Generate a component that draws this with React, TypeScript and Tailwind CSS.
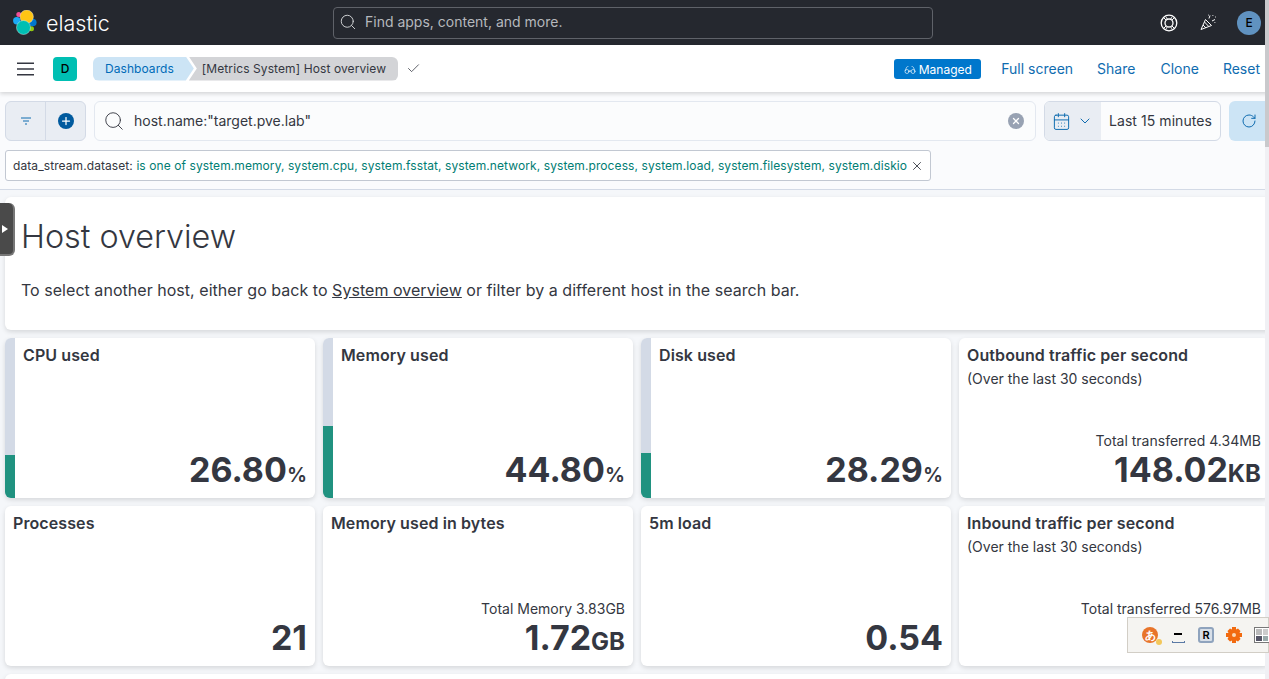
import { Search, CalendarDays, ChevronDown, RotateCw, X, Plus, Check, Glasses } from 'lucide-react'

const font = { fontFamily: 'Inter, sans-serif' }

function ElasticLogo() {
    return (
        <svg width="26" height="26" viewBox="0 0 26 26" className="shrink-0">
            <circle cx="3.8" cy="10.800" r="3.700" fill="#1ba9f5" />
            <circle cx="19.800" cy="12.500" r="3.800" fill="#0077cc" />
            <circle cx="5.800" cy="4.500" r="2.500" fill="#f04e98" />
            <circle cx="18.500" cy="18.800" r="2.500" fill="#93c90e" />
            <circle cx="13.700" cy="6.700" r="6.700" fill="#fec514" stroke="#f5f7fa" strokeWidth="0.4" />
            <circle cx="10.500" cy="17.500" r="7" fill="#00bfb3" stroke="#f5f7fa" strokeWidth="0.4" />
        </svg>
    )
}

function LifeBuoyIcon() {
    return (
        <svg width="18" height="18" viewBox="0 0 18 18" fill="none" stroke="white" strokeWidth="1.300" className="shrink-0">
            <circle cx="9" cy="9" r="7.800" />
            <circle cx="9" cy="9" r="4" />
            <path d="M3.500 3.500l2.700 2.700M6.200 3.200l1.200 2.100M14.500 3.500l-2.700 2.700M11.800 3.200l-1.200 2.100M3.500 14.500l2.700-2.700M6.200 14.800l1.200-2.100M14.500 14.500l-2.700-2.700M11.800 14.800l-1.200-2.100" strokeWidth="1" />
        </svg>
    )
}

function PartyIcon() {
    return (
        <svg width="17" height="17" viewBox="0 0 17 17" fill="none" stroke="white" strokeWidth="1" className="shrink-0">
            <path d="M1 15.500L5.500 5.500l6 6z" />
            <path d="M3 11l3 3M4.500 8l4.200 4.400" />
            <path d="M9 4.500l1-3M12 7l3-1.500" />
            <path d="M12.500 1.500h.8M15 3h.8M14.500 8.500h.8M8 1.200h.6" strokeWidth="1.200" />
        </svg>
    )
}

type Stat = {
    title: string
    subtitle?: string
    caption?: string
    value: string
    unit?: string
    fill?: number
}

function StatCard({ title, subtitle, caption, value, unit, fill }: Stat) {
    return (
        <div className="relative flex h-40 w-[310px] shrink-0 overflow-hidden rounded-md bg-white shadow-[0_2px_5px_rgba(0,0,0,0.13)]">
            {fill !== undefined && (
                <div className="flex w-2.5 shrink-0 flex-col justify-end bg-[#d3dae6]">
                    <div className="bg-[#209280]" style={{ height: `${fill}%` }} />
                </div>
            )}
            <div className="flex min-w-0 flex-1 flex-col px-2 pb-[7px] pt-[7px]">
                <div className="text-base font-semibold leading-5 tracking-[0.1px] text-[#343741]">{title}</div>
                {subtitle && <div className="mt-[5px] text-sm leading-[17px] text-[#343741]">{subtitle}</div>}
                <div className="mt-auto text-right">
                    {caption && <div className="text-sm leading-[17px] text-[#343741]">{caption}</div>}
                    <div className="h-[42px] text-[34px] font-bold leading-[42px] text-[#343741]">
                        {value}
                        {unit && <span className={unit === '%' ? 'text-[20px] font-semibold leading-none' : 'text-[24px] font-bold leading-none'}>{unit}</span>}
                    </div>
                </div>
            </div>
        </div>
    )
}

function ImeToolbar() {
    return (
        <div className="absolute left-[1127px] top-[617px] z-30 flex h-[36px] w-[142px] items-center gap-3 border border-[#d2cec6] bg-[#f5f4f1] pl-[14px]">
            <div className="relative flex h-4 w-4 shrink-0 items-center justify-center rounded-full bg-[#e8742a] text-[11px] font-bold leading-none text-white">
                あ
                <div className="absolute -bottom-0.5 -right-1 h-1.5 w-1.5 rounded-full bg-[#f3c75a]" />
            </div>
            <div className="flex h-4 w-4 shrink-0 flex-col items-center justify-end">
                <div className="mb-1.5 h-0.5 w-2 bg-black" />
                <div className="h-0.5 w-[13px] border-x border-b border-[#5b7aa5]" />
            </div>
            <div className="flex h-4 w-4 shrink-0 items-center justify-center rounded-[3px] border-2 border-[#8fa3bd] bg-[#d8dfe8] text-[11px] font-semibold leading-none text-black">
                R
            </div>
            <svg width="16" height="16" viewBox="0 0 16 16" className="shrink-0">
                <path d="M6 0h4v2.500l2-1 2.500 2.500-1 2h2.500v4h-2.500l1 2-2.500 2.500-2-1v2.500h-4v-2.500l-2 1-2.500-2.500 1-2h-2.500v-4h2.500l-1-2 2.500-2.500 2 1z" fill="#f26a0f" />
                <circle cx="8" cy="8" r="2" fill="#fbd9b5" />
            </svg>
            <div className="grid h-4 w-4 shrink-0 grid-cols-2 gap-px border border-[#777] bg-white p-px">
                <div className="bg-[#bbb]" />
                <div className="bg-[#ccc]" />
                <div className="bg-[#556]" />
                <div className="bg-[#9aa]" />
            </div>
        </div>
    )
}

export default function App() {
    return (
        <div className="relative h-[679px] w-[1269px] overflow-hidden bg-[#f5f7fa]" style={font}>
            {/* Top header */}
            <header className="flex h-[45px] items-center bg-[#25282f]">
                <div className="flex w-[333px] shrink-0 items-center pl-[13px]">
                    <ElasticLogo />
                    <span className="ml-[7px] mt-0.5 text-[21.5px] font-light leading-none text-white">elastic</span>
                </div>
                <div className="flex h-8 w-[600px] items-center gap-[7px] rounded border border-[#5f6269] pb-0.5 pl-[5px] text-sm text-[#b5b8bd]">
                    <Search className="h-[18px] w-[18px] text-[#d4d6d9]" strokeWidth={1.25} />
                    <span className="ml-px">Find apps, content, and more.</span>
                </div>
                <div className="ml-auto flex items-center pr-2">
                    <LifeBuoyIcon />
                    <div className="ml-[22px]">
                        <PartyIcon />
                    </div>
                    <div className="ml-5 flex h-6 w-6 items-center justify-center rounded-full bg-[#6092c0] text-xs font-medium text-black">E</div>
                </div>
            </header>

            {/* App bar */}
            <div className="relative z-10 flex h-[47px] items-center bg-white pl-[17px] shadow-[0_2px_4px_rgba(0,0,0,0.15)]">
                <svg width="17" height="14" viewBox="0 0 17 14" stroke="#343741" strokeWidth="1.600">
                    <path d="M0 1.200h17M0 7h17M0 12.800h17" />
                </svg>
                <div className="ml-[19px] flex h-6 w-6 items-center justify-center rounded bg-[#00bfb3] text-xs font-medium text-black">D</div>
                <div className="ml-4 flex h-6 items-center rounded-l-md bg-[#cce4f5] pl-3 pr-5 text-xs tracking-[0.06px] text-[#006bb8] [clip-path:polygon(0_0,calc(100%-8px)_0,100%_50%,calc(100%-8px)_100%,0_100%)]">
                    Dashboards
                </div>
                <div className="-ml-[5px] flex h-6 items-center rounded-r-md bg-[#d3d4d7] pl-[13px] pr-3 text-xs tracking-[0.1px] text-[#343741] [clip-path:polygon(0_0,100%_0,100%_100%,0_100%,8px_50%)]">
                    [Metrics System] Host overview
                </div>
                <Check className="ml-[8px] h-[15px] w-[15px] text-[#343741]" strokeWidth={1.25} />
                <div className="ml-auto flex items-center pr-[9px] text-sm text-[#0f6cb0]">
                    <div className="flex h-5 w-[87px] items-center justify-center gap-[3px] rounded-[3px] bg-[#0077cc] pt-0.5 text-xs text-white">
                        <Glasses className="h-3 w-3" strokeWidth={1.25} />
                        Managed
                    </div>
                    <span className="ml-5">Full screen</span>
                    <span className="ml-6">Share</span>
                    <span className="ml-[25px]">Clone</span>
                    <span className="ml-6">Reset</span>
                </div>
            </div>

            {/* Query bar */}
            <div className="flex items-center gap-2 bg-[#fafbfd] pl-[5px] pt-[9px]">
                <div className="flex h-10 w-[81px] overflow-hidden rounded-md border border-[#d3dae6] bg-[#e9edf3]">
                    <div className="flex w-10 items-center justify-center border-r border-[#d3dae6]">
                        <svg width="12" height="12" viewBox="0 0 12 12" stroke="#0f6cb0" fill="none">
                            <path d="M1 3h10M3 6h6M5 9h2" />
                        </svg>
                    </div>
                    <div className="flex flex-1 items-center justify-center">
                        <div className="flex h-4 w-4 items-center justify-center rounded-full bg-[#005a9e]">
                            <Plus className="h-3 w-3 text-white" strokeWidth={2.5} />
                        </div>
                    </div>
                </div>
                <div className="flex h-10 w-[942px] items-center rounded-md border border-[#e3e8f0] bg-[#fbfcfd] pl-[8px] pr-[11px] text-sm text-[#343741]">
                    <Search className="h-[22px] w-[22px] text-[#343741]" strokeWidth={1} />
                    <span className="ml-[9px]">host.name:"target.pve.lab"</span>
                    <div className="ml-auto flex h-4 w-4 items-center justify-center rounded-full bg-[#98a2b3]">
                        <X className="h-2.5 w-2.5 text-white" strokeWidth={3} />
                    </div>
                </div>
                <div className="flex h-10 w-[177px] overflow-hidden rounded-md border border-[#d3dae6] bg-[#fbfcfd]">
                    <div className="flex w-14 items-center gap-1.5 bg-[#e9edf3] pl-[7px] text-[#0f6cb0]">
                        <CalendarDays className="h-[19px] w-[19px] shrink-0" strokeWidth={1.25} />
                        <ChevronDown className="h-4 w-4 shrink-0" strokeWidth={1.5} />
                    </div>
                    <div className="flex flex-1 items-center pl-2 text-sm tracking-[0.06px] text-[#343741]">Last 15 minutes</div>
                </div>
                <div className="flex h-10 flex-1 items-center rounded-l-md bg-[#cce4f5] pl-3 pr-1">
                    <RotateCw className="h-4 w-4 text-[#0f6cb0]" strokeWidth={1.5} />
                </div>
            </div>

            {/* Filter pill */}
            <div className="border-b border-[#d3dae6] bg-[#fafbfd] pb-2 pl-[5px] pt-[9px]">
                <div className="flex h-[31px] w-[926px] items-center whitespace-nowrap rounded-[3px] border border-[#c2c8d2] bg-white pl-[7px] text-xs tracking-[0.085px] text-[#343741]">
                    data_stream.dataset:&nbsp;
                    <span className="text-[#017d73]">is one of system.memory, system.cpu, system.fsstat, system.network, system.process, system.load, system.filesystem, system.diskio</span>
                    <X className="ml-[3px] h-[14px] w-[14px] text-[#343741]" strokeWidth={1.5} />
                </div>
            </div>

            {/* Dashboard panels */}
            <main className="flex w-[1265px] flex-col gap-2 overflow-hidden pl-[5px] pt-[7px]">
                <div className="h-[133px] w-[1270px] shrink-0 rounded-md bg-white pl-4 pt-5 shadow-[0_2px_5px_rgba(0,0,0,0.13)]">
                    <h1 className="text-[32.3px] font-light leading-10 text-[#343741]">Host overview</h1>
                    <p className="mt-[21px] text-base leading-6 tracking-[0.035px] text-[#343741]">
                        To select another host, either go back to <span className="underline">System overview</span> or filter by a different host in the search bar.
                    </p>
                </div>
                <div className="flex shrink-0 gap-2">
                    <StatCard title="CPU used" value="26.80" unit="%" fill={27} />
                    <StatCard title="Memory used" value="44.80" unit="%" fill={45} />
                    <StatCard title="Disk used" value="28.29" unit="%" fill={28} />
                    <StatCard title="Outbound traffic per second" subtitle="(Over the last 30 seconds)" caption="Total transferred 4.34MB" value="148.02" unit="KB" />
                </div>
                <div className="flex shrink-0 gap-2">
                    <StatCard title="Processes" value="21" />
                    <StatCard title="Memory used in bytes" caption="Total Memory 3.83GB" value="1.72" unit="GB" />
                    <StatCard title="5m load" value="0.54" />
                    <StatCard title="Inbound traffic per second" subtitle="(Over the last 30 seconds)" caption="Total transferred 576.97MB" value="" />
                </div>
                <div className="h-20 w-[1270px] shrink-0 rounded-md bg-white shadow-[0_2px_5px_rgba(0,0,0,0.13)]" />
            </main>

            {/* Scrollbar */}
            <div className="absolute right-0 top-0 z-20 h-full w-1 bg-[#f0f0f4]">
                <div className="h-[147px] bg-[#c9c9cc]" />
            </div>

            {/* Side handle */}
            <div className="absolute left-0 top-[203px] z-20 flex h-[53px] w-[15px] items-center rounded-r-md border-b-2 border-r-2 border-[#777] bg-[#4a4a4a]">
                <svg width="6" height="8" viewBox="0 0 6 8" className="ml-0.5">
                    <path d="M0 0l6 4-6 4z" fill="white" />
                </svg>
            </div>

            <ImeToolbar />
        </div>
    )
}
